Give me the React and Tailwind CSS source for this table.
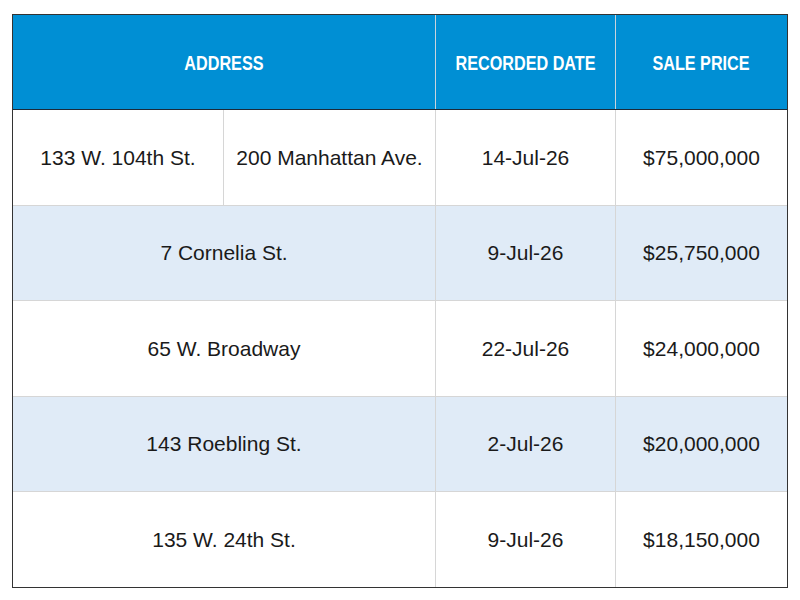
const rows = [
  { split: ['133 W. 104th St.', '200 Manhattan Ave.'], date: '14-Jul-26', price: '$75,000,000', h: 'h-[96px]' },
  { address: '7 Cornelia St.', date: '9-Jul-26', price: '$25,750,000', h: 'h-[95px]', alt: true },
  { address: '65 W. Broadway', date: '22-Jul-26', price: '$24,000,000', h: 'h-[96px]' },
  { address: '143 Roebling St.', date: '2-Jul-26', price: '$20,000,000', h: 'h-[95px]', alt: true },
  { address: '135 W. 24th St.', date: '9-Jul-26', price: '$18,150,000', h: 'h-[95px]', last: true },
];

const HeadCell = ({ children, className = '' }) => (
  <div className={`flex items-center justify-center pt-[1px] text-white font-bold text-[20px] ${className}`}>
    <span className="inline-block whitespace-nowrap scale-x-[0.81]">{children}</span>
  </div>
);

const Cell = ({ children, className = '' }) => (
  <div className={`flex items-center justify-center text-[21px] text-[#1a1a1a] ${className}`}>{children}</div>
);

export default function App() {
  return (
    <div className="w-[800px] h-[600px] bg-white pt-[14px] pl-[12px]">
      <div className="w-[776px] border border-[#333] flex flex-col">
        <div
          className="h-[95px] grid grid-cols-[422px_180px_1fr] bg-[#008fd4] border-b border-[#1c2a38]"
          style={{ fontFamily: '"Liberation Sans", Arial, sans-serif' }}
        >
          <HeadCell>ADDRESS</HeadCell>
          <HeadCell className="border-l border-[#c9d3dc]">RECORDED DATE</HeadCell>
          <HeadCell className="border-l border-[#c9d3dc]">SALE PRICE</HeadCell>
        </div>
        <div style={{ fontFamily: '"Liberation Sans", Arial, sans-serif' }}>
          {rows.map((r, i) => (
            <div
              key={i}
              className={`${r.h} grid grid-cols-[210px_212px_180px_1fr] ${r.alt ? 'bg-[#e0ebf7]' : 'bg-white'} ${r.last ? '' : 'border-b border-[#d6d6d6]'}`}
            >
              {r.split ? (
                <>
                  <Cell>{r.split[0]}</Cell>
                  <Cell className="border-l border-[#d6d6d6]">{r.split[1]}</Cell>
                </>
              ) : (
                <Cell className="col-span-2">{r.address}</Cell>
              )}
              <Cell className="border-l border-[#d6d6d6]">{r.date}</Cell>
              <Cell className="border-l border-[#d6d6d6]">{r.price}</Cell>
            </div>
          ))}
        </div>
      </div>
    </div>
  );
}
